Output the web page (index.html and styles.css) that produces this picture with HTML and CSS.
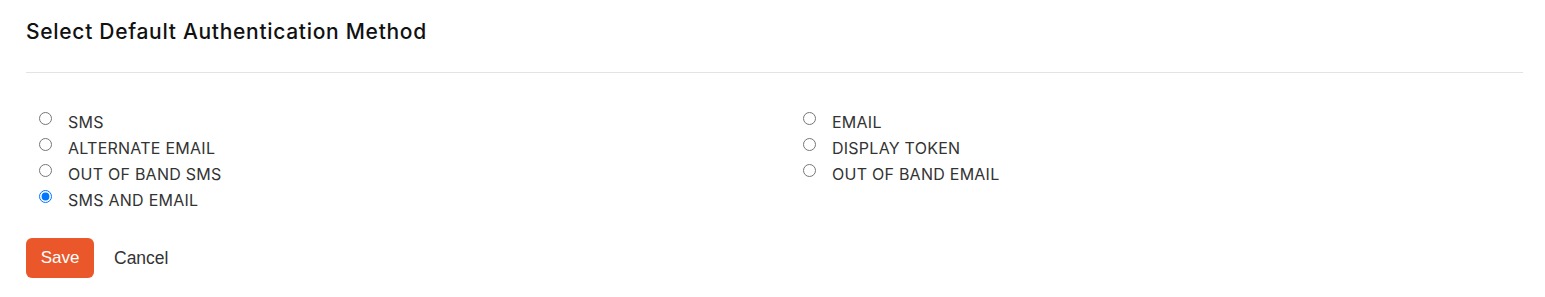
FILE: index.html
```html
<!DOCTYPE html>
<html lang="en">
<head>
<meta charset="utf-8">
<title>Select Default Authentication Method</title>
<link rel="stylesheet" href="styles.css">
</head>
<body>
<div class="card">
  <div class="card-header">
    <h2 class="title">Select Default Authentication Method</h2>
  </div>
  <form class="card-body">
    <div class="options">
      <div class="col">
        <label class="opt"><input type="radio" name="method" value="sms"><span>SMS</span></label>
        <label class="opt"><input type="radio" name="method" value="alt-email"><span>ALTERNATE EMAIL</span></label>
        <label class="opt"><input type="radio" name="method" value="oob-sms"><span>OUT OF BAND SMS</span></label>
        <label class="opt"><input type="radio" name="method" value="sms-email" checked><span>SMS AND EMAIL</span></label>
      </div>
      <div class="col">
        <label class="opt"><input type="radio" name="method" value="email"><span>EMAIL</span></label>
        <label class="opt"><input type="radio" name="method" value="token"><span>DISPLAY TOKEN</span></label>
        <label class="opt"><input type="radio" name="method" value="oob-email"><span>OUT OF BAND EMAIL</span></label>
      </div>
    </div>
    <div class="actions">
      <button type="button" class="btn-save">Save</button>
      <button type="button" class="btn-cancel">Cancel</button>
    </div>
  </form>
</div>
</body>
</html>
```

FILE: styles.css
```css
* { box-sizing: border-box; }

html, body {
  margin: 0;
  padding: 0;
  background: #ffffff;
}

body {
  font-family: Inter, "Open Sans", "Noto Sans", sans-serif;
  color: #333333;
}

.card {
  padding: 0 22px 0 26px;
}

.card-header {
  padding-top: 19px;
  padding-bottom: 28px;
  border-bottom: 1px solid #e3e3e3;
}

.title {
  margin: 0;
  font-size: 21px;
  line-height: 25px;
  font-weight: 500;
  color: #111111;
  letter-spacing: 0.7px;
}

.card-body {
  padding-top: 35px;
}

.options {
  display: grid;
  grid-template-columns: 764px 1fr;
  padding-left: 13px;
}

.col {
  display: flex;
  flex-direction: column;
}

.opt {
  display: flex;
  align-items: flex-start;
  height: 26px;
  font-size: 16px;
  line-height: 26px;
  letter-spacing: 0.25px;
  color: #333333;
  cursor: pointer;
}

.opt input {
  margin: 4px 16px 0 0;
  width: 13px;
  height: 13px;
}

.opt span {
  padding-top: 1px;
}

.actions {
  display: flex;
  align-items: center;
  gap: 20px;
  margin-top: 26px;
}

.btn-save {
  width: 68px;
  height: 40px;
  border: none;
  border-radius: 6px;
  background: #e9572b;
  color: #ffffff;
  font-family: "Liberation Sans", Arial, sans-serif;
  font-size: 17px;
  cursor: pointer;
  padding: 0;
}

.btn-cancel {
  border: none;
  background: none;
  padding: 0;
  font-family: "Liberation Sans", Arial, sans-serif;
  font-size: 17.5px;
  color: #333333;
  cursor: pointer;
}
```
